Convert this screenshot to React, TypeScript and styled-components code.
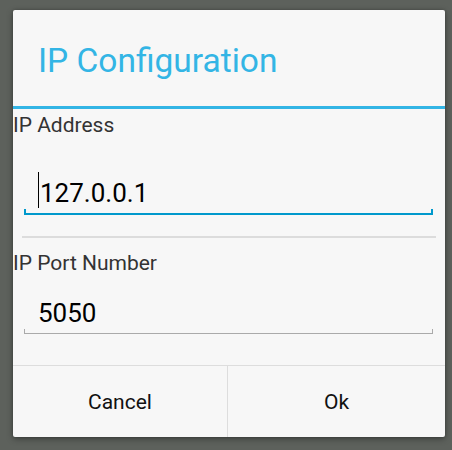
import React from "react";
import styled, { createGlobalStyle } from "styled-components";

const Global = createGlobalStyle`
  html, body { margin: 0; padding: 0; background: #5d615c; }
  body { font-family: Roboto, "Noto Sans", sans-serif; }
  * { box-sizing: border-box; }
`;

const Screen = styled.div`
  width: 452px;
  height: 450px;
  padding: 10px 7px 0 13px;
`;

const Dialog = styled.div`
  width: 432px;
  height: 427px;
  background: #f7f7f7;
  border-radius: 2px;
  box-shadow: 0 2px 6px rgba(0, 0, 0, 0.35), 0 0 3px rgba(0, 0, 0, 0.2);
  display: flex;
  flex-direction: column;
  overflow: hidden;
`;

const TitleBar = styled.div`
  height: 99px;
  padding: 31px 0 0 25px;
  border-bottom: 3px solid #33b5e5;
`;

const Title = styled.h1`
  margin: 0;
  font-weight: 400;
  font-size: 33.5px;
  line-height: 40px;
  color: #33b5e5;
`;

const Body = styled.div`
  flex: 1;
  display: flex;
  flex-direction: column;
`;

const Label = styled.div<{ $top: number }>`
  margin-top: ${(p) => p.$top}px;
  font-size: 21px;
  line-height: 24px;
  color: #333333;
`;

const Field = styled.div<{ $focused?: boolean; $height: number }>`
  position: relative;
  margin: 0 12px 0 11px;
  height: ${(p) => p.$height}px;
  display: flex;
  align-items: flex-end;
  padding: 0 0 5px 14px;
  font-size: 26px;
  line-height: 30px;
  color: #000;
  border-bottom: ${(p) => (p.$focused ? "2px solid #0099cc" : "1px solid #aaaaaa")};
  &::before, &::after {
    content: "";
    position: absolute;
    bottom: ${(p) => (p.$focused ? -2 : -1)}px;
    width: ${(p) => (p.$focused ? 2 : 1)}px;
    height: ${(p) => (p.$focused ? 6 : 5)}px;
    background: ${(p) => (p.$focused ? "#0099cc" : "#aaaaaa")};
  }
  &::before { left: 0; }
  &::after { right: 0; }
`;

const Cursor = styled.span`
  display: inline-block;
  width: 1px;
  height: 36px;
  background: #000;
  margin-right: 1px;
  align-self: flex-end;
`;

const Separator = styled.div`
  margin: 21px 9px 0 9px;
  height: 2px;
  background: #dcdcdc;
`;

const ButtonBar = styled.div`
  height: 72px;
  display: grid;
  grid-template-columns: 215px 1fr;
  border-top: 1px solid #dddddd;
`;

const Button = styled.button<{ $divider?: boolean }>`
  border: none;
  background: transparent;
  font-family: Roboto, "Noto Sans", sans-serif;
  font-size: 21px;
  color: #111;
  padding: 0;
  border-right: ${(p) => (p.$divider ? "1px solid #dddddd" : "none")};
`;

export default function App() {
  return (
    <>
      <Global />
      <Screen>
        <Dialog>
          <TitleBar>
            <Title>IP Configuration</Title>
          </TitleBar>
          <Body>
            <Label $top={4}>IP Address</Label>
            <Field $focused $height={78}>
              <Cursor />
              127.0.0.1
            </Field>
            <Separator />
            <Label $top={13}>IP Port Number</Label>
            <Field $height={59}>5050</Field>
          </Body>
          <ButtonBar>
            <Button $divider>Cancel</Button>
            <Button>Ok</Button>
          </ButtonBar>
        </Dialog>
      </Screen>
    </>
  );
}
